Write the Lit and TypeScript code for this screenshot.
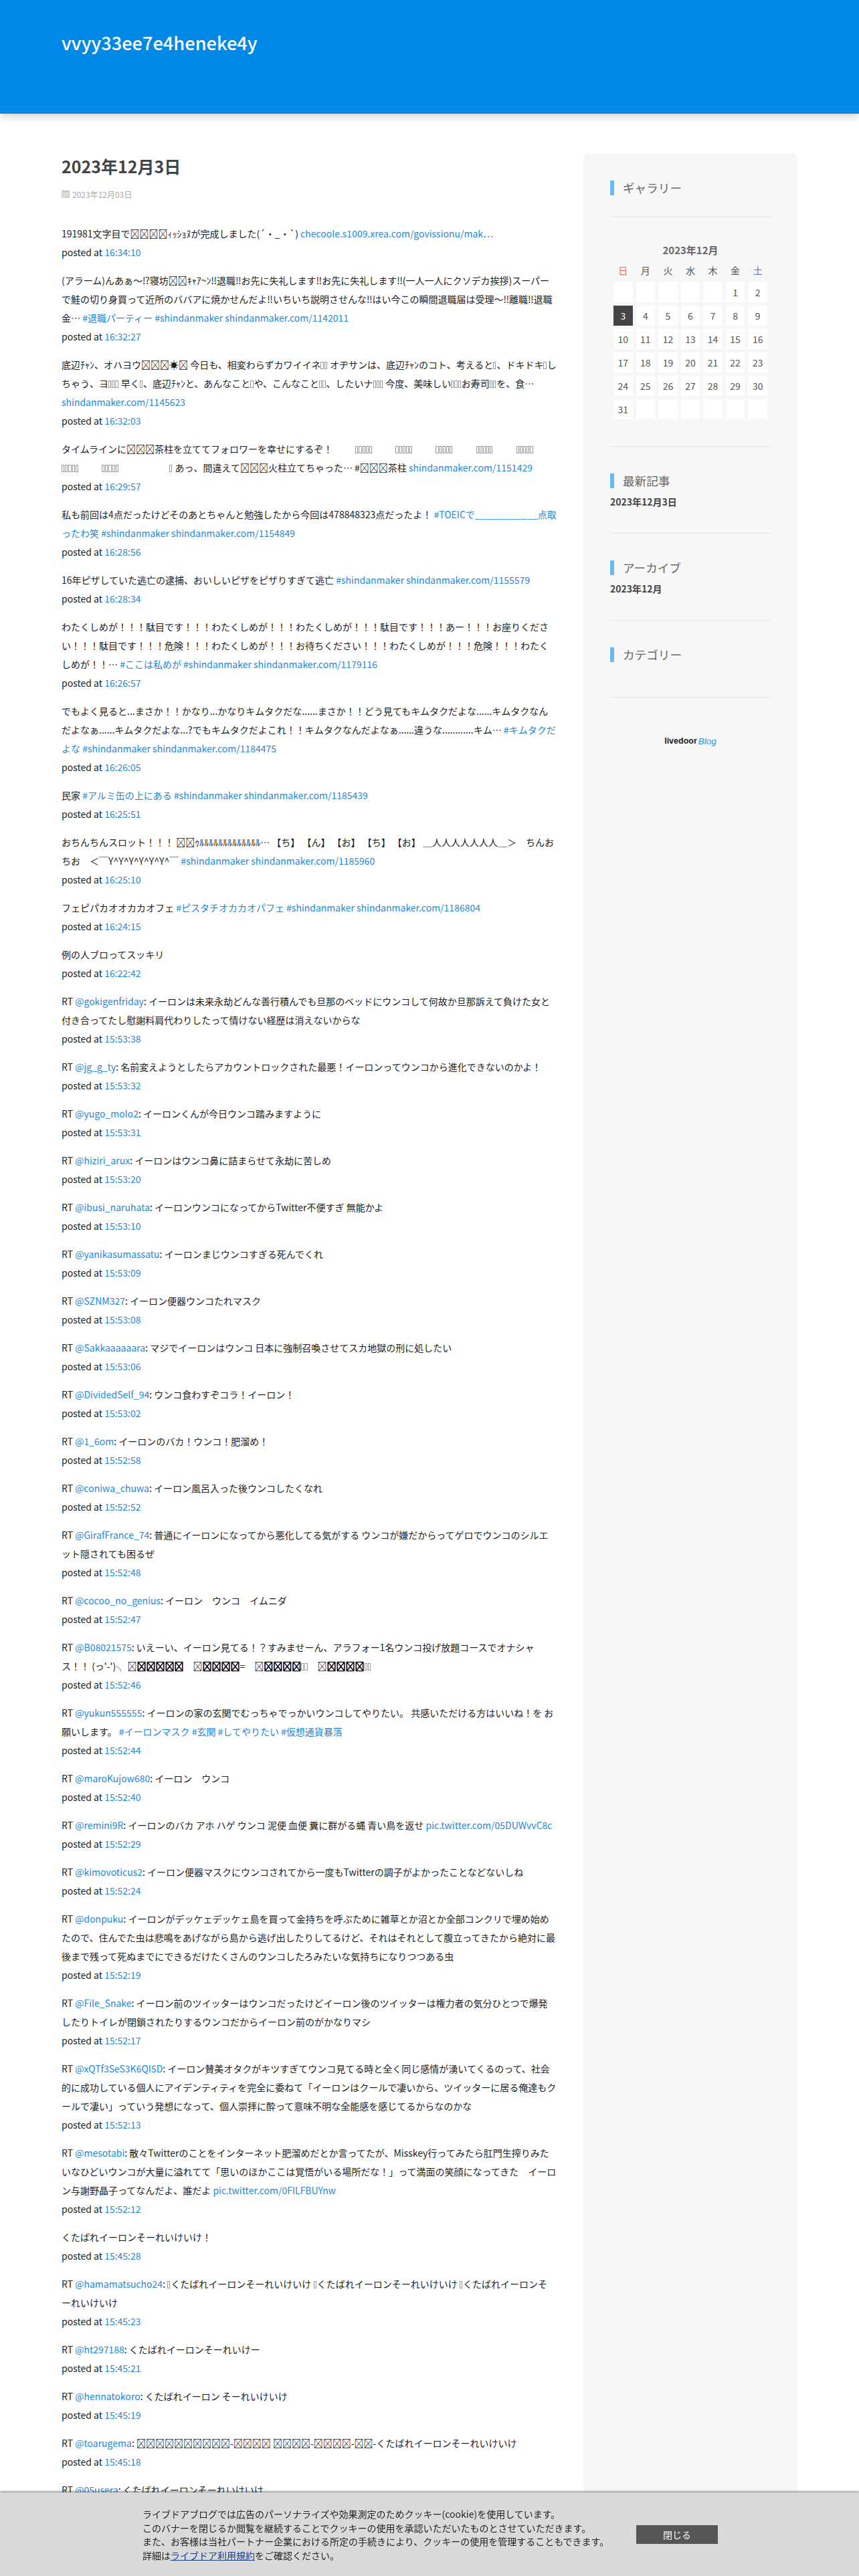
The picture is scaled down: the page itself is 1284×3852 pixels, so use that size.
import { LitElement, html, css } from "lit";
import { customElement } from "lit/decorators.js";

const B = "\uE000";
const S = "\uE001";
const G = "\uE002";
const S5 = S + S + S + S + S;
const SM = "#shindanmaker";
const B5 = B + B + B + B + B;
const posts: [string, string][] = [
  [`191981文字目で${B}${B}${B}${B}ｨｯｼｮﾇが完成しました(´・_・\`) [[checoole.s1009.xrea.com/govissionu/mak…]]`, "16:34:10"],
  [`(アラーム)んあぁ〜⁉寝坊${B}${B}ｷｬｱ~ﾝ‼退職‼お先に失礼します‼お先に失礼します‼(一人一人にクソデカ挨拶)スーパーで鮭の切り身買って近所のババアに焼かせんだよ‼いちいち説明させんな‼はい今この瞬間退職届は受理〜‼離職‼退職金… [[#退職パーティー]] [[${SM}]] [[shindanmaker.com/1142011]]`, "16:32:27"],
  [`底辺ﾁｬﾝ、オハヨウ${B}${B}${B}☀${B} 今日も、相変わらずカワイイネ${S}${S} オヂサンは、底辺ﾁｬﾝのコト、考えると${S}、ドキドキ${S}しちゃう、ヨ${S}${S}${S} 早く${S}、底辺ﾁｬﾝと、あんなこと${S}や、こんなこと${S}${S}、したいナ${S}${S}${S} 今度、美味しい${S}${S}${S}お寿司${S}${S}を、食… [[shindanmaker.com/1145623]]`, "16:32:03"],
  [`タイムラインに${B}${B}${B}茶柱を立ててフォロワーを幸せにするぞ！ ${G}${S5} ${G}${S5} ${G}${S5} ${G}${S5} ${G}${S5} ${G}${S5} ${G}${S5} ${G} ${G}\u2002${S} あっ、間違えて${B}${B}${B}火柱立てちゃった… #${B}${B}${B}茶柱 [[shindanmaker.com/1151429]]`, "16:29:57"],
  [`私も前回は4点だったけどそのあとちゃんと勉強したから今回は478848323点だったよ！ [[#TOEICで____________点取ったわ笑]] [[${SM}]] [[shindanmaker.com/1154849]]`, "16:28:56"],
  [`16年ピザしていた逃亡の逮捕、おいしいピザをピザりすぎて逃亡 [[${SM}]] [[shindanmaker.com/1155579]]`, "16:28:34"],
  [`わたくしめが！！！駄目です！！！わたくしめが！！！わたくしめが！！！駄目です！！！あー！！！お座りください！！！駄目です！！！危険！！！わたくしめが！！！お待ちください！！！わたくしめが！！！危険！！！わたくしめが！！… [[#ここは私めが]] [[${SM}]] [[shindanmaker.com/1179116]]`, "16:26:57"],
  [`でもよく見ると...まさか！！かなり...かなりキムタクだな......まさか！！どう見てもキムタクだよな......キムタクなんだよなぁ......キムタクだよな...?でもキムタクだよこれ！！キムタクなんだよなぁ......違うな............キム… [[#キムタクだよな]] [[${SM}]] [[shindanmaker.com/1184475]]`, "16:26:05"],
  [`民家 [[#アルミ缶の上にある]] [[${SM}]] [[shindanmaker.com/1185439]]`, "16:25:51"],
  [`おちんちんスロット！！！ ${B}${B}ｩﾙﾙﾙﾙﾙﾙﾙﾙﾙﾙﾙﾙﾙ… 【ち】 【ん】 【お】 【ち】 【お】 ＿人人人人人人人＿＞　ちんおちお　＜￣Y^Y^Y^Y^Y^Y^￣ [[${SM}]] [[shindanmaker.com/1185960]]`, "16:25:10"],
  [`フェピパカオオカカオフェ [[#ピスタチオカカオパフェ]] [[${SM}]] [[shindanmaker.com/1186804]]`, "16:24:15"],
  [`例の人ブロってスッキリ`, "16:22:42"],
  [`RT [[@gokigenfriday]]: イーロンは未来永劫どんな善行積んでも旦那のベッドにウンコして何故か旦那訴えて負けた女と付き合ってたし慰謝料肩代わりしたって情けない経歴は消えないからな`, "15:53:38"],
  [`RT [[@jg_g_ty]]: 名前変えようとしたらアカウントロックされた最悪！イーロンってウンコから進化できないのかよ！`, "15:53:32"],
  [`RT [[@yugo_molo2]]: イーロンくんが今日ウンコ踏みますように`, "15:53:31"],
  [`RT [[@hiziri_arux]]: イーロンはウンコ鼻に詰まらせて永劫に苦しめ`, "15:53:20"],
  [`RT [[@ibusi_naruhata]]: イーロンウンコになってからTwitter不便すぎ 無能かよ`, "15:53:10"],
  [`RT [[@yanikasumassatu]]: イーロンまじウンコすぎる死んでくれ`, "15:53:09"],
  [`RT [[@SZNM327]]: イーロン便器ウンコたれマスク`, "15:53:08"],
  [`RT [[@Sakkaaaaaara]]: マジでイーロンはウンコ 日本に強制召喚させてスカ地獄の刑に処したい`, "15:53:06"],
  [`RT [[@DividedSelf_94]]: ウンコ食わすぞコラ！イーロン！`, "15:53:02"],
  [`RT [[@1_6om]]: イーロンのバカ！ウンコ！肥溜め！`, "15:52:58"],
  [`RT [[@coniwa_chuwa]]: イーロン風呂入った後ウンコしたくなれ`, "15:52:52"],
  [`RT [[@GirafFrance_74]]: 普通にイーロンになってから悪化してる気がする ウンコが嫌だからってゲロでウンコのシルエット隠されても困るぜ`, "15:52:48"],
  [`RT [[@cocoo_no_genius]]: イーロン　ウンコ　イムニダ`, "15:52:47"],
  [`RT [[@B08021575]]: いえーい、イーロン見てる！？すみませーん、アラフォー1名ウンコ投げ放題コースでオナシャス！！ (っ'-')╮ ${B}{{${B5}}}　${B}{{${B}${B}${B}${B}}}=　${B}{{${B}${B}${B}${B}}}${S}${S}　${B}{{${B}${B}${B}${B}}}${S}${S}`, "15:52:46"],
  [`RT [[@yukun555555]]: イーロンの家の玄関でむっちゃでっかいウンコしてやりたい。 共感いただける方はいいね！を お願いします。 [[#イーロンマスク]] [[#玄関]] [[#してやりたい]] [[#仮想通貨暴落]]`, "15:52:44"],
  [`RT [[@maroKujow680]]: イーロン　ウンコ`, "15:52:40"],
  [`RT [[@remini9R]]: イーロンのバカ アホ ハゲ ウンコ 泥便 血便 糞に群がる蝿 青い鳥を返せ [[pic.twitter.com/05DUWvvC8c]]`, "15:52:29"],
  [`RT [[@kimovoticus2]]: イーロン便器マスクにウンコされてから一度もTwitterの調子がよかったことなどないしね`, "15:52:24"],
  [`RT [[@donpuku]]: イーロンがデッケェデッケェ島を買って金持ちを呼ぶために雑草とか沼とか全部コンクリで埋め始めたので、住んでた虫は悲鳴をあげながら島から逃げ出したりしてるけど、それはそれとして腹立ってきたから絶対に最後まで残って死ぬまでにできるだけたくさんのウンコしたろみたいな気持ちになりつつある虫`, "15:52:19"],
  [`RT [[@File_Snake]]: イーロン前のツイッターはウンコだったけどイーロン後のツイッターは権力者の気分ひとつで爆発したりトイレが閉鎖されたりするウンコだからイーロン前のがかなりマシ`, "15:52:17"],
  [`RT [[@xQTf3SeS3K6QI5D]]: イーロン賛美オタクがキツすぎてウンコ見てる時と全く同じ感情が湧いてくるのって、社会的に成功している個人にアイデンティティを完全に委ねて「イーロンはクールで凄いから、ツイッターに居る俺達もクールで凄い」っていう発想になって、個人崇拝に酔って意味不明な全能感を感じてるからなのかな`, "15:52:13"],
  [`RT [[@mesotabi]]: 散々Twitterのことをインターネット肥溜めだとか言ってたが、Misskey行ってみたら肛門生搾りみたいなひどいウンコが大量に溢れてて「思いのほかここは覚悟がいる場所だな！」って満面の笑顔になってきた　イーロン与謝野晶子ってなんだよ、誰だよ [[pic.twitter.com/0FILFBUYnw]]`, "15:52:12"],
  [`くたばれイーロンそーれいけいけ！`, "15:45:28"],
  [`RT [[@hamamatsucho24]]: ${S}くたばれイーロンそーれいけいけ ${S}くたばれイーロンそーれいけいけ ${S}くたばれイーロンそーれいけいけ`, "15:45:23"],
  [`RT [[@ht297188]]: くたばれイーロンそーれいけー`, "15:45:21"],
  [`RT [[@hennatokoro]]: くたばれイーロン そーれいけいけ`, "15:45:19"],
  [`RT [[@toarugema]]: ${B5}${B5}-${B}${B}${B}${B} ${B}${B}${B}${B}-${B}${B}${B}${B}-${B}${B}-くたばれイーロンそーれいけいけ`, "15:45:18"],
  [`RT [[@05usera]]: くたばれイーロンそーれいけいけ`, ""],
];

const inline = (s: string): unknown[] =>
  s.split(/(\uE001|\uE002)/).map((p) =>
    p === S ? html`<span class="t"></span>` : p === G ? html`<span class="g"></span>` : p
  );

const rich = (s: string) =>
  s.split(/(\[\[.*?\]\]|\{\{.*?\}\})/).map((p) =>
    p.startsWith("[[")
      ? html`<a>${p.slice(2, -2)}</a>`
      : p.startsWith("{{")
        ? html`<span class="heavy">${p.slice(2, -2)}</span>`
        : inline(p)
  );

const weeks: (number | null)[][] = [
  [null, null, null, null, null, 1, 2],
  [3, 4, 5, 6, 7, 8, 9],
  [10, 11, 12, 13, 14, 15, 16],
  [17, 18, 19, 20, 21, 22, 23],
  [24, 25, 26, 27, 28, 29, 30],
  [31, null, null, null, null, null, null],
];

@customElement("app-root")
export class AppRoot extends LitElement {
  static styles = css`
    :host {
      display: block;
      font-family: "Noto Sans CJK JP", "Noto Sans", sans-serif;
      font-size: 14px;
      color: #222;
      background: #fff;
    }
    a { color: #1e88d8; text-decoration: none; }
    .header {
      height: 170px;
      background: #0088e6;
      box-shadow: 0 4px 12px rgba(0, 0, 0, 0.18);
      box-sizing: border-box;
      padding: 43px 92px 0;
    }
    .title {
      margin: 0;
      color: #fff;
      font-size: 27.2px;
      line-height: 40px;
      font-weight: 500;
    }
    .wrap {
      display: flex;
      gap: 40px;
      width: 1100px;
      margin: 60px 0 0 92px;
      align-items: stretch;
    }
    .main {
      width: 740px;
      flex: none;
      padding-bottom: 120px;
    }
    h1 {
      margin: 0;
      font-size: 25px;
      line-height: 36px;
      font-weight: 700;
      color: #444;
    }
    .date {
      display: flex;
      align-items: center;
      gap: 4px;
      margin-top: 15px;
      height: 18px;
      font-size: 12px;
      color: #aaa;
    }
    .date svg { width: 12px; height: 12px; flex: none; }
    .posts { margin-top: 36px; }
    .post { margin: 0 0 14px; line-height: 28px; }
    .post p { margin: 0; }
    .t {
      display: inline-block;
      box-sizing: border-box;
      width: 4.2px;
      height: 11px;
      margin-right: 1px;
      border: 1px solid #999;
      vertical-align: -1px;
    }
    .g { display: inline-block; width: 31px; height: 1px; }
    .heavy { -webkit-text-stroke: 0.7px #000; }
    .side {
      width: 320px;
      flex: none;
      box-sizing: border-box;
      padding: 30px 40px 40px;
      background: #f7f7f7;
      border-radius: 8px;
    }
    .widget { border-bottom: 1px solid #e2e2e2; padding: 40px 0 35px; }
    .widget.first { padding: 10px 0 32px; }
    .widget.cal { padding: 38px 0 35px; }
    .widget.cat { padding-bottom: 52px; }
    .head {
      margin: 0;
      height: 22px;
      line-height: 22px;
      font-size: 17.6px;
      font-weight: 400;
      color: #666;
      border-left: 6px solid #66bbf5;
      padding-left: 13px;
    }
    .link {
      margin-top: 8px;
      font-size: 14px;
      line-height: 24px;
      font-weight: 700;
      color: #444;
    }
    table {
      width: 240px;
      table-layout: fixed;
      border-collapse: separate;
      border-spacing: 5px;
      font-size: 14px;
      color: #555;
      text-align: center;
    }
    caption { font-size: 15px; font-weight: 700; color: #666; line-height: 22px; }
    th { font-weight: 400; height: 27px; padding: 0; color: #555; }
    th.sun { color: #f66; }
    th.sat { color: #47d; }
    td { height: 30px; padding: 0; background: #fff; }
    td.on { background: #444; color: #fff; }
    .logo {
      margin-top: 57px;
      display: flex;
      justify-content: center;
      align-items: center;
      gap: 2px;
      height: 16px;
      font-family: "Liberation Sans", sans-serif;
      font-size: 12.5px;
      font-weight: 700;
      color: #222;
    }
    .logo i { font-weight: 400; color: #2a93dc; font-size: 13.5px; }
    .cookie {
      position: fixed;
      left: 0;
      right: 0;
      bottom: 0;
      height: 125px;
      box-sizing: border-box;
      background: #dadada;
      box-shadow: 0 -1px 3px rgba(0, 0, 0, 0.6);
      padding: 22px 0 0 213px;
      display: flex;
      color: #222;
      line-height: 20.7px;
    }
    .cookie .txt { width: 738px; flex: none; }
    .cookie a { color: #1a3a8a; text-decoration: underline; }
    .close {
      margin-top: 27px;
      width: 122px;
      height: 28px;
      background: #555;
      color: #fff;
      display: flex;
      align-items: center;
      justify-content: center;
    }
  `;

  render() {
    return html`
      <div class="header"><p class="title">vvyy33ee7e4heneke4y</p></div>
      <div class="wrap">
        <div class="main">
          <h1>2023年12月3日</h1>
          <div class="date">
            <svg viewBox="0 0 12 12" fill="#c4c4c4">
              <rect x="2.5" y="0" width="1" height="2"></rect>
              <rect x="8.5" y="0" width="1" height="2"></rect>
              <rect x="0" y="1" width="12" height="2.4"></rect>
              <path d="M0 4h12v8H0zM1 5v1.5h2V5zm3 0v1.5h2V5zm3 0v1.5h2V5zm3 0v1.5h1V5zM1 7.500v1.500h2v-1.500zm3 0v1.500h2v-1.500zm3 0v1.500h2v-1.500zm3 0v1.500h1v-1.500zM1 10v1h2v-1zm3 0v1h2v-1zm3 0v1h2v-1zm3 0v1h1v-1z" fill-rule="evenodd"></path>
            </svg>
            <span>2023年12月03日</span>
          </div>
          <div class="posts">
            ${posts.map(
              ([t, time]) => html`<div class="post">
                <p>${rich(t)}</p>
                ${time ? html`<p>posted at <a>${time}</a></p>` : ""}
              </div>`
            )}
          </div>
        </div>
        <aside class="side">
          <div class="widget first"><h4 class="head">ギャラリー</h4></div>
          <div class="widget cal">
            <table>
              <caption>2023年12月</caption>
              <thead>
                <tr>
                  <th class="sun">日</th><th>月</th><th>火</th><th>水</th><th>木</th><th>金</th><th class="sat">土</th>
                </tr>
              </thead>
              <tbody>
                ${weeks.map(
                  (w) => html`<tr>
                    ${w.map((d) => html`<td class=${d === 3 ? "on" : ""}>${d ?? ""}</td>`)}
                  </tr>`
                )}
              </tbody>
            </table>
          </div>
          <div class="widget"><h4 class="head">最新記事</h4><div class="link">2023年12月3日</div></div>
          <div class="widget"><h4 class="head">アーカイブ</h4><div class="link">2023年12月</div></div>
          <div class="widget cat"><h4 class="head">カテゴリー</h4></div>
          <div class="logo"><span>livedoor</span><i>Blog</i></div>
        </aside>
      </div>
      <div class="cookie">
        <div class="txt">
          ライブドアブログでは広告のパーソナライズや効果測定のためクッキー(cookie)を使用しています。<br />
          このバナーを閉じるか閲覧を継続することでクッキーの使用を承認いただいたものとさせていただきます。<br />
          また、お客様は当社パートナー企業における所定の手続きにより、クッキーの使用を管理することもできます。<br />
          詳細は<a>ライブドア利用規約</a>をご確認ください。
        </div>
        <div class="close">閉じる</div>
      </div>
    `;
  }
}
